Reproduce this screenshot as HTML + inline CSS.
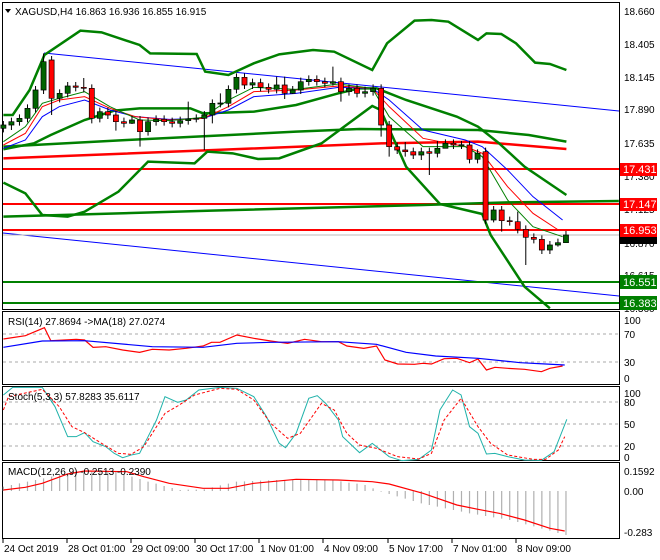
<!DOCTYPE html>
<html><head><meta charset="utf-8"><style>
html,body{margin:0;padding:0;background:#fff;}
svg{display:block;font-family:"Liberation Sans",sans-serif;font-size:10px;}
.z *{vector-effect:non-scaling-stroke;}
</style></head><body>
<svg width="660" height="560" viewBox="0 0 660 560" xmlns="http://www.w3.org/2000/svg">
<rect width="660" height="560" fill="#fff"/>
<g fill="none" stroke="#000" stroke-width="1">
<rect x="2.5" y="2.5" width="617" height="307"/>
<rect x="2.5" y="311.5" width="617" height="73"/>
<rect x="2.5" y="386.5" width="617" height="74"/>
<rect x="2.5" y="462.5" width="617" height="76"/>
</g>
<g stroke="#aaa" stroke-dasharray="3,3" stroke-width="1">
<line x1="3" y1="334" x2="619" y2="334"/><line x1="3" y1="362" x2="619" y2="362"/>
<line x1="3" y1="402" x2="619" y2="402"/><line x1="3" y1="424" x2="619" y2="424"/><line x1="3" y1="446" x2="619" y2="446"/>
</g>
<!-- main straight lines -->
<line x1="44" y1="53" x2="619" y2="111" stroke="#0000ff" stroke-width="1"/>
<line x1="3" y1="233" x2="619" y2="296" stroke="#0000ff" stroke-width="1"/>
<line x1="3" y1="169" x2="619" y2="169" stroke="#f00" stroke-width="2"/>
<line x1="3" y1="204" x2="619" y2="204" stroke="#f00" stroke-width="2"/>
<line x1="3" y1="230" x2="619" y2="230" stroke="#f00" stroke-width="2"/>
<line x1="3" y1="235" x2="619" y2="235" stroke="#bbb" stroke-width="1"/>
<line x1="3" y1="282" x2="619" y2="282" stroke="#008000" stroke-width="2"/>
<line x1="3" y1="303" x2="619" y2="303" stroke="#008000" stroke-width="2"/>
<g class="z" transform="scale(0.423,0.33333)" fill="none">
<polyline stroke="#f00" stroke-width="2.5" points="8,475 470,452 900,430 1130,425 1339,447"/>
<polyline stroke="#008000" stroke-width="2.5" points="8,440 300,420 700,395 850,387 1130,390 1250,405 1339,425"/>
<polyline stroke="#008000" stroke-width="2.5" points="8,650 500,632 1000,615 1200,607 1463,603"/>
<polyline stroke="#008000" stroke-width="2.5" points="8,345 30,345 70,270 105,165 190,92 240,97 330,135 355,160 465,162 485,215 540,225 600,190 660,163 740,150 790,155 880,210 915,130 980,62 1020,60 1060,65 1130,120 1150,100 1185,102 1220,130 1265,188 1300,192 1339,210"/>
<polyline stroke="#008000" stroke-width="2.5" points="8,448 80,430 120,405 200,360 270,332 330,325 450,325 480,340 600,335 700,315 800,280 850,265 890,265 960,300 1080,350 1130,380 1180,430 1240,500 1339,585"/>
<polyline stroke="#008000" stroke-width="2.5" points="8,548 60,580 100,645 160,650 200,635 280,575 350,485 460,490 490,455 550,460 610,477 660,475 760,430 880,318 900,330 960,500 1040,612 1140,642 1160,705 1240,860 1300,925"/>
<polyline stroke="#0000ff" stroke-width="1" points="8,445 60,420 100,350 140,320 200,300 260,330 320,350 400,358 480,355 540,330 600,290 700,280 800,262 880,265 920,300 1000,390 1100,420 1140,440 1200,510 1260,590 1330,660"/>
<polyline stroke="#f00" stroke-width="1" points="8,435 60,400 100,320 140,300 200,290 260,325 320,350 400,360 480,355 540,320 600,275 700,270 800,258 880,265 920,320 1000,415 1100,440 1140,460 1200,560 1260,640 1320,690"/>
<polyline stroke="#008000" stroke-width="1" points="8,425 60,380 100,310 140,295 200,275 260,320 330,360 400,362 480,352 540,300 600,262 700,268 800,252 880,265 920,350 1000,440 1100,440 1140,470 1200,600 1260,680 1330,710"/>
<path stroke="#000" stroke-width="1" d="M8 363V397M27 353V390M46 343V377M65 313V367M84 258V337M103 160V282M122 168V345M141 268V307M160 246V292M179 246V274M198 234V277M217 253V370M236 323V367M255 323V357M274 333V392M293 353V382M312 348V372M331 348V440M350 353V407M369 346V377M388 346V377M407 353V382M426 350V382M445 305V374M464 343V367M483 333V450M502 298V370M521 280V322M540 256V322M559 220V280M578 220V267M597 236V267M616 236V274M635 250V280M654 230V280M673 230V297M692 258V282M711 233V282M730 226V257M749 226V257M768 233V262M787 200V257M806 233V305M825 253V287M844 253V292M863 260V292M882 253V287M901 253V410M920 363V470M939 428V462M958 426V470M977 443V477M996 443V480M1015 443V525M1034 423V472M1053 418V445M1072 418V447M1091 423V447M1110 423V490M1129 448V490M1148 443V672M1167 618V667M1186 618V695M1205 650V677M1224 635V700M1243 676V795M1262 700V730M1281 706V762M1300 723V762M1319 716V740M1338 693V728"/>
<g fill="#006400" stroke="#000" stroke-width="0.7">
<rect x="2" y="375" width="12" height="10"/><rect x="21" y="365" width="12" height="10"/><rect x="40" y="355" width="12" height="10"/><rect x="59" y="325" width="12" height="30"/><rect x="78" y="270" width="12" height="55"/><rect x="97" y="185" width="12" height="85"/><rect x="135" y="280" width="12" height="15"/><rect x="154" y="258" width="12" height="22"/><rect x="230" y="335" width="12" height="20"/><rect x="306" y="360" width="12" height="10"/><rect x="344" y="365" width="12" height="30"/><rect x="363" y="358" width="12" height="7"/><rect x="420" y="362" width="12" height="8"/><rect x="439" y="357" width="12" height="5"/><rect x="458" y="355" width="12" height="3"/><rect x="477" y="345" width="12" height="10"/><rect x="496" y="310" width="12" height="35"/><rect x="515" y="309" width="12" height="3"/><rect x="534" y="268" width="12" height="42"/><rect x="553" y="232" width="12" height="36"/><rect x="591" y="248" width="12" height="7"/><rect x="648" y="255" width="12" height="13"/><rect x="686" y="270" width="12" height="10"/><rect x="705" y="245" width="12" height="25"/><rect x="724" y="238" width="12" height="7"/><rect x="781" y="245" width="12" height="5"/><rect x="819" y="265" width="12" height="10"/><rect x="857" y="275" width="12" height="5"/><rect x="876" y="265" width="12" height="10"/><rect x="990" y="455" width="12" height="10"/><rect x="1028" y="445" width="12" height="15"/><rect x="1047" y="430" width="12" height="15"/><rect x="1085" y="434" width="12" height="3"/><rect x="1123" y="460" width="12" height="18"/><rect x="1161" y="630" width="12" height="30"/><rect x="1294" y="735" width="12" height="15"/><rect x="1313" y="728" width="12" height="7"/><rect x="1332" y="705" width="12" height="23"/>
</g>
<g fill="#f00" stroke="#000" stroke-width="0.7">
<rect x="116" y="180" width="12" height="115"/><rect x="173" y="258" width="12" height="4"/><rect x="192" y="262" width="12" height="3"/><rect x="211" y="265" width="12" height="90"/><rect x="249" y="335" width="12" height="10"/><rect x="268" y="345" width="12" height="20"/><rect x="287" y="365" width="12" height="5"/><rect x="325" y="360" width="12" height="35"/><rect x="382" y="358" width="12" height="7"/><rect x="401" y="365" width="12" height="5"/><rect x="572" y="232" width="12" height="23"/><rect x="610" y="248" width="12" height="14"/><rect x="629" y="262" width="12" height="6"/><rect x="667" y="255" width="12" height="25"/><rect x="743" y="238" width="12" height="7"/><rect x="762" y="245" width="12" height="5"/><rect x="800" y="245" width="12" height="30"/><rect x="838" y="265" width="12" height="15"/><rect x="895" y="265" width="12" height="110"/><rect x="914" y="375" width="12" height="65"/><rect x="933" y="440" width="12" height="10"/><rect x="952" y="450" width="12" height="5"/><rect x="971" y="455" width="12" height="10"/><rect x="1009" y="455" width="12" height="5"/><rect x="1066" y="430" width="12" height="5"/><rect x="1104" y="435" width="12" height="43"/><rect x="1142" y="455" width="12" height="205"/><rect x="1180" y="630" width="12" height="32"/><rect x="1199" y="662" width="12" height="3"/><rect x="1218" y="665" width="12" height="23"/><rect x="1237" y="688" width="12" height="24"/><rect x="1256" y="712" width="12" height="6"/><rect x="1275" y="718" width="12" height="32"/>
</g>
</g>
<g class="z" transform="translate(0,300) scale(0.423,0.33333)" fill="none">
<polyline stroke="#f00" stroke-width="1.2" points="8,117 60,107 105,83 120,122 180,118 200,120 220,142 250,140 290,150 330,157 360,148 400,150 440,145 480,138 500,127 520,127 560,105 600,115 640,123 680,130 720,118 760,125 800,125 820,138 860,145 890,138 910,180 940,192 980,193 1000,190 1020,192 1050,176 1080,175 1110,188 1130,177 1150,210 1170,202 1200,205 1240,208 1280,215 1300,205 1330,198"/>
<polyline stroke="#0000ff" stroke-width="1.2" points="8,142 100,123 200,122 360,140 480,142 560,130 640,127 800,125 890,133 960,157 1030,168 1130,175 1230,188 1290,192 1335,195"/>
<polyline stroke="#20b2aa" stroke-width="1" points="8,285 30,262 100,262 130,320 160,410 180,410 200,398 220,425 250,440 270,460 290,473 310,465 330,460 350,410 370,360 390,290 420,307 440,300 470,270 520,262 560,265 600,290 630,350 660,430 675,443 700,400 730,295 750,287 770,310 800,360 810,410 850,458 880,430 920,470 950,482 990,478 1020,450 1040,330 1070,270 1090,285 1110,380 1130,400 1150,462 1170,460 1200,470 1240,480 1280,481 1310,455 1340,358"/>
<polyline stroke="#f00" stroke-width="1" stroke-dasharray="3,2" points="8,330 20,290 100,268 140,320 170,380 200,398 240,430 280,460 310,463 340,440 360,400 390,340 420,318 460,285 520,265 560,268 600,300 640,370 680,415 710,400 760,310 790,330 820,400 850,435 890,445 940,470 990,477 1020,460 1050,360 1090,295 1130,380 1160,430 1200,465 1260,478 1290,478 1320,450 1335,410"/>
<path stroke="#b0b0b0" stroke-width="1.2" d="M8 573V560M27 573V555M46 573V550M65 573V545M84 573V540M103 573V535M122 573V530M141 573V525M160 573V520M179 573V515M198 573V515M217 573V515M236 573V515M255 573V515M274 573V515M293 573V522M312 573V530M331 573V537M350 573V545M369 573V551M388 573V558M407 573V564M426 573V570M445 573V569M464 573V569M483 573V568M502 573V562M521 573V556M540 573V551M559 573V545M578 573V544M597 573V543M616 573V542M635 573V541M654 573V540M673 573V540M692 573V540M711 573V540M730 573V540M749 573V540M768 573V540M787 573V540M806 573V544M825 573V548M844 573V551M863 573V555M882 573V565M901 573V575M920 573V582M939 573V589M958 573V596M977 573V603M996 573V610M1015 573V615M1034 573V620M1053 573V625M1072 573V630M1091 573V635M1110 573V640M1129 573V644M1148 573V648M1167 573V652M1186 573V656M1205 573V660M1224 573V666M1243 573V673M1262 573V679M1281 573V686M1300 573V692M1319 573V699M1338 573V705"/>
<polyline stroke="#f00" stroke-width="1.2" points="8,570 60,562 100,550 160,522 200,513 300,515 340,530 400,550 480,565 540,565 600,550 700,538 800,540 880,545 920,552 1000,580 1080,615 1130,628 1180,640 1240,660 1300,685 1335,693"/>
</g>
<g font-size="10" fill="#000">
<path d="M5 9 L11 9 L8 13 Z" fill="#000"/>
<text x="15" y="15">XAGUSD,H4  16.863 16.936 16.855 16.915</text>
<text x="8" y="325">RSI(14) 27.8694  -&gt;MA(18) 27.0274</text>
<text x="8" y="400">Stoch(5,3,3) 57.8283 35.6117</text>
<text x="8" y="475">MACD(12,26,9) -0.2513 -0.2390</text>
</g>
<g font-size="10" fill="#000">
<text x="624" y="15">18.660</text>
<text x="624" y="48">18.405</text>
<text x="624" y="81">18.145</text>
<text x="624" y="113">17.890</text>
<text x="624" y="147">17.635</text>
<text x="624" y="180">17.380</text>
<text x="624" y="213">17.125</text>
<text x="624" y="247">16.870</text>
<text x="624" y="279">16.615</text>
<text x="624" y="312">16.360</text>
<text x="624" y="324">100</text>
<text x="624" y="338">70</text>
<text x="624" y="366">30</text>
<text x="624" y="382">0</text>
<text x="624" y="397">100</text>
<text x="624" y="406">80</text>
<text x="624" y="428">50</text>
<text x="624" y="450">20</text>
<text x="624" y="461">0</text>
<text x="624" y="475">0.1592</text>
<text x="624" y="495">0.00</text>
<text x="624" y="536">-0.283</text>
</g>
<g font-size="11" fill="#fff">
<rect x="620" y="163" width="37" height="13" fill="#f00"/><text x="623" y="173">17.431</text>
<rect x="620" y="198" width="37" height="13" fill="#f00"/><text x="623" y="208">17.147</text>
<rect x="620" y="224" width="37" height="13" fill="#f00"/><text x="623" y="234">16.953</text>
<rect x="620" y="237" width="37" height="7" fill="#000"/>
<rect x="620" y="275" width="37" height="14" fill="#008000"/><text x="623" y="286">16.551</text>
<rect x="620" y="296" width="37" height="14" fill="#008000"/><text x="623" y="307">16.383</text>
</g>
<g stroke="#000" stroke-width="1">
<path d="M3 539V543M67 539V543M131 539V543M195 539V543M259 539V543M323 539V543M388 539V543M452 539V543M516 539V543"/>
</g>
<g font-size="10" fill="#000">
<text x="4" y="552">24 Oct 2019</text>
<text x="68" y="552">28 Oct 01:00</text>
<text x="132" y="552">29 Oct 09:00</text>
<text x="196" y="552">30 Oct 17:00</text>
<text x="260" y="552">1 Nov 01:00</text>
<text x="324" y="552">4 Nov 09:00</text>
<text x="389" y="552">5 Nov 17:00</text>
<text x="453" y="552">7 Nov 01:00</text>
<text x="517" y="552">8 Nov 09:00</text>
</g>
</svg>
</body></html>
